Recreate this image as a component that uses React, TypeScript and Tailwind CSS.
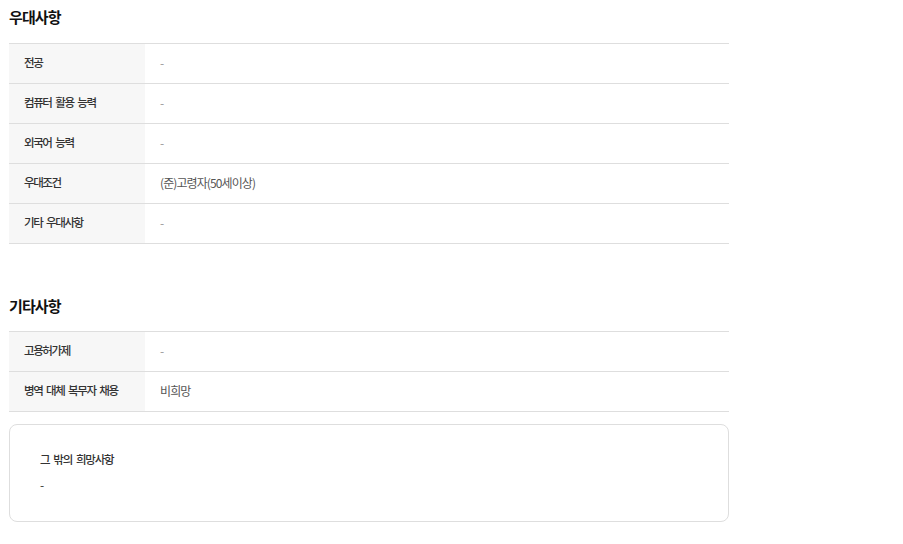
const PREFER = [
  { label: '전공', value: '-' },
  { label: '컴퓨터 활용 능력', value: '-' },
  { label: '외국어 능력', value: '-' },
  { label: '우대조건', value: '(준)고령자(50세이상)' },
  { label: '기타 우대사항', value: '-' },
];

const ETC = [
  { label: '고용허가제', value: '-' },
  { label: '병역 대체 복무자 채용', value: '비희망' },
];

function InfoTable({ rows }: { rows: { label: string; value: string }[] }) {
  return (
    <div className="border-t border-[#dedede]">
      {rows.map((row) => (
        <div key={row.label} className="flex h-10 border-b border-[#dedede]">
          <div className="w-[136px] shrink-0 bg-[#f7f7f7] pl-[15px] pb-[2px] flex items-center text-[11.5px] tracking-[-1.4px] [word-spacing:2.5px] font-medium text-[#333]">
            {row.label}
          </div>
          <div
            className={`pl-[15px] pb-[2px] flex items-center text-[12px] tracking-[-0.9px] [word-spacing:2px] ${
              row.value === '-' ? 'text-[#999]' : 'text-[#555]'
            }`}
          >
            {row.value}
          </div>
        </div>
      ))}
    </div>
  );
}

export default function App() {
  return (
    <div
      className="w-[903px] h-[544px] bg-white px-[9px] pt-[5px]"
      style={{ fontFamily: '"Noto Sans CJK KR", "Noto Sans", sans-serif' }}
    >
      <div className="w-[720px]">
        <h2 className="h-6 leading-6 text-[15px] tracking-[-0.9px] font-bold text-[#111] mb-[14px]">우대사항</h2>
        <InfoTable rows={PREFER} />

        <h2 className="h-6 leading-6 text-[15px] tracking-[-0.9px] font-bold text-[#111] mt-[50px] mb-[13px]">기타사항</h2>
        <InfoTable rows={ETC} />

        <div className="mt-[12px] h-[98px] rounded-lg border border-[#dedede] px-[30px] pt-[24px]">
          <div className="text-[11.5px] tracking-[-1.2px] [word-spacing:2.5px] font-medium text-[#333] leading-5">
            그 밖의 희망사항
          </div>
          <div className="mt-[6px] text-[12px] text-[#333] leading-5">-</div>
        </div>
      </div>
    </div>
  );
}
